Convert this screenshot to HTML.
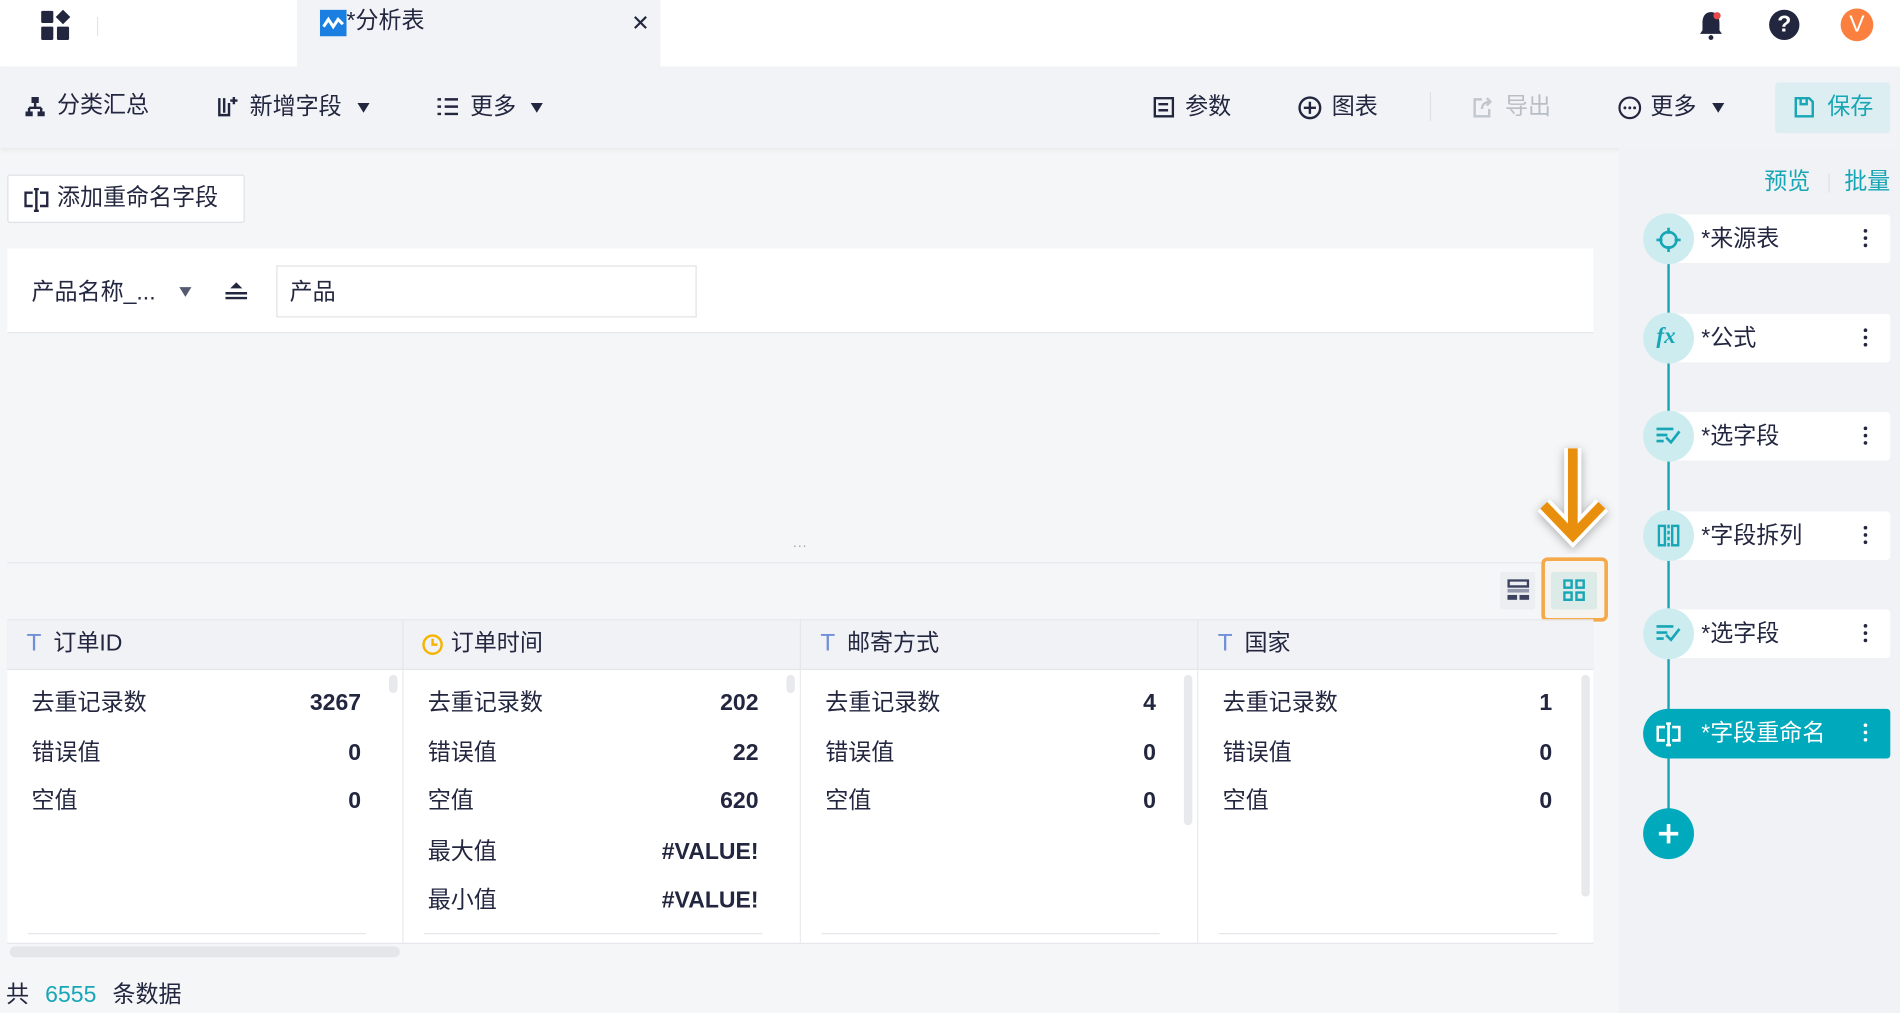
<!DOCTYPE html>
<html><head><meta charset="utf-8">
<style>
*{box-sizing:border-box;margin:0;padding:0}
html,body{width:1900px;height:1013px;overflow:hidden;background:#f5f6f8}
#w{width:1568px;height:836px;transform:scale(1.21173);transform-origin:0 0;position:relative;font-family:"Liberation Sans","Noto Sans CJK SC",sans-serif;color:#22263f;font-size:19px}
.a{position:absolute}
.t{position:absolute;white-space:nowrap;line-height:1}
.cap{position:absolute;width:0;height:0;border-left:5px solid transparent;border-right:5px solid transparent;border-top:8px solid #22263f}
.node{position:absolute;left:1377px;width:183px;height:40px;background:#fff;border-radius:0 3px 3px 0}
.circ{position:absolute;left:1356px;width:42px;height:42px;border-radius:50%;background:#cdecf0}
.dots{position:absolute;left:1538px;width:4px}
.dots i{display:block;width:3px;height:3px;background:#22263f;border-radius:50%;margin-bottom:3px}
.col{position:absolute;top:553px;height:225px;background:#fff;border-right:1px solid #e8e9ed}
.hd{position:absolute;top:512px;height:41px;background:#f0f2f5;border-right:1px solid #e4e6ea;border-bottom:1px solid #e4e6ea}
.lab{position:absolute;left:20px;font-size:19px;line-height:1}
.val{position:absolute;right:34px;font-weight:bold;font-size:19px;line-height:1}
</style></head><body><div id="w">
<!-- top bar -->
<div class="a" style="left:0;top:0;width:1568px;height:55px;background:#fff"></div>
<svg class="a" style="left:33px;top:8px" width="26" height="26" viewBox="0 0 26 26"><rect x="1" y="1" width="10" height="10" rx="1" fill="#22263f"/><path d="M19 0 L25 6 L19 12 L13 6Z" fill="#22263f"/><rect x="1" y="14" width="10" height="11" rx="1" fill="#22263f"/><rect x="14" y="14" width="10" height="11" rx="1" fill="#22263f"/></svg>
<div class="a" style="left:80px;top:14px;width:1px;height:16px;background:#e4e4e4"></div>
<div class="a" style="left:245px;top:0;width:300px;height:55px;background:#f2f3f7"></div>
<svg class="a" style="left:264px;top:8px" width="22" height="22" viewBox="0 0 22 22"><rect width="22" height="22" fill="#1a7fe0"/><path d="M3 14 L7 8 L11 14 L15 8 L19 12" stroke="#fff" stroke-width="2.5" fill="none"/></svg>
<div class="t" style="left:286px;top:8px;font-size:19px">*分析表</div>
<div class="t" style="left:521px;top:10px;font-size:18px">✕</div>
<svg class="a" style="left:1401px;top:8px" width="22" height="26" viewBox="0 0 22 26"><path d="M11 2 C6 2 4 6 4 11 L4 17 L2 20 L20 20 L18 17 L18 11 C18 6 16 2 11 2Z" fill="#22263f"/><circle cx="11" cy="23" r="2" fill="#22263f"/><circle cx="16" cy="5" r="3" fill="#e84a4a"/></svg>
<div class="a" style="left:1460px;top:8px;width:25px;height:25px;border-radius:50%;background:#22263f;color:#fff;font-weight:bold;font-size:19px;text-align:center;line-height:25px">?</div>
<div class="a" style="left:1519px;top:7px;width:27px;height:27px;border-radius:50%;background:#fb8040;color:#fff;font-size:19px;text-align:center;line-height:27px">V</div>
<!-- toolbar -->
<div class="a" style="left:0;top:55px;width:1568px;height:67px;background:#f2f3f7;box-shadow:0 2px 4px rgba(0,0,0,.05)"></div>
<svg class="a" style="left:21px;top:80px" width="16" height="16" viewBox="0 0 16 16"><rect x="5" y="0" width="6" height="5" fill="#22263f"/><path d="M8 5V9M3 9H13M3 9V13M13 9V13" stroke="#22263f" stroke-width="2" fill="none"/><rect x="0" y="12" width="6" height="4" fill="#22263f"/><rect x="10" y="12" width="6" height="4" fill="#22263f"/></svg>
<div class="t" style="left:47px;top:78px">分类汇总</div>
<svg class="a" style="left:179px;top:79px" width="18" height="18" viewBox="0 0 18 18"><path d="M2 2V16H10V6" stroke="#22263f" stroke-width="2" fill="none"/><path d="M6 2V14M11 4H17M14 1V7" stroke="#22263f" stroke-width="2"/></svg>
<div class="t" style="left:206px;top:79px">新增字段</div>
<div class="cap" style="left:295px;top:85px"></div>
<svg class="a" style="left:361px;top:80px" width="17" height="16" viewBox="0 0 17 16"><path d="M0 2H3M6 2H17M0 8H3M6 8H17M0 14H3M6 14H17" stroke="#22263f" stroke-width="2"/></svg>
<div class="t" style="left:388px;top:79px">更多</div>
<div class="cap" style="left:438px;top:85px"></div>
<svg class="a" style="left:952px;top:80px" width="17" height="17" viewBox="0 0 17 17"><rect x="1" y="1" width="15" height="15" fill="none" stroke="#22263f" stroke-width="2"/><path d="M4 6H12M4 11H12" stroke="#22263f" stroke-width="2"/></svg>
<div class="t" style="left:978px;top:79px">参数</div>
<svg class="a" style="left:1071px;top:79px" width="20" height="20" viewBox="0 0 20 20"><circle cx="10" cy="10" r="8.5" fill="none" stroke="#22263f" stroke-width="2"/><path d="M10 5V15M5 10H15" stroke="#22263f" stroke-width="2"/></svg>
<div class="t" style="left:1099px;top:79px">图表</div>
<div class="a" style="left:1180px;top:76px;width:1px;height:24px;background:#dde0e5"></div>
<svg class="a" style="left:1215px;top:79px" width="18" height="19" viewBox="0 0 18 19"><path d="M8 3H2V17H14V11" stroke="#c2c6cf" stroke-width="2" fill="none"/><path d="M8 11C8 7 11 5 15 5M12 2L15 5L12 8" stroke="#c2c6cf" stroke-width="2" fill="none"/></svg>
<div class="t" style="left:1242px;top:79px;color:#b9bdc6">导出</div>
<svg class="a" style="left:1335px;top:79px" width="20" height="20" viewBox="0 0 20 20"><circle cx="10" cy="10" r="8.5" fill="none" stroke="#22263f" stroke-width="1.8"/><circle cx="6" cy="10" r="1.2" fill="#22263f"/><circle cx="10" cy="10" r="1.2" fill="#22263f"/><circle cx="14" cy="10" r="1.2" fill="#22263f"/></svg>
<div class="t" style="left:1362px;top:79px">更多</div>
<div class="cap" style="left:1413px;top:85px"></div>
<div class="a" style="left:1465px;top:68px;width:95px;height:42px;background:#ddeef2;border-radius:3px"></div>
<svg class="a" style="left:1480px;top:79px" width="18" height="19" viewBox="0 0 18 19"><path d="M2 2H13L16 5V17H2Z" fill="none" stroke="#17a6b5" stroke-width="2"/><path d="M6 2V7H11V2" stroke="#17a6b5" stroke-width="2" fill="none"/></svg>
<div class="t" style="left:1508px;top:79px;color:#17a6b5">保存</div>
<!-- right panel -->
<div class="a" style="left:1336px;top:122px;width:232px;height:714px;background:#f0f2f5"></div>
<div class="t" style="left:1456px;top:141px;color:#17a6b5">预览</div>
<div class="a" style="left:1509px;top:143px;width:1px;height:16px;background:#dde0e5"></div>
<div class="t" style="left:1522px;top:141px;color:#17a6b5">批量</div>
<div class="a" style="left:1376px;top:200px;width:1.5px;height:488px;background:#17a6b5"></div>
<div class="node" style="top:177px"></div><div class="circ" style="top:176px"></div>
<svg class="a" style="left:1366px;top:187px" width="22" height="22" viewBox="0 0 22 22"><circle cx="11" cy="11" r="6.5" fill="none" stroke="#17a6b5" stroke-width="2.2"/><path d="M11 1V6M11 16V21M1 11H6M16 11H21" stroke="#17a6b5" stroke-width="2.2"/></svg>
<div class="t" style="left:1404px;top:188px">*来源表</div><div class="dots" style="top:189px"><i></i><i></i><i></i></div>
<div class="node" style="top:259px"></div><div class="circ" style="top:258px"></div>
<div class="t" style="left:1367px;top:268px;color:#17a6b5;font-style:italic;font-family:'Liberation Serif',serif;font-weight:bold;font-size:19px">fx</div>
<div class="t" style="left:1404px;top:270px">*公式</div><div class="dots" style="top:271px"><i></i><i></i><i></i></div>
<div class="node" style="top:340px"></div><div class="circ" style="top:339px"></div>
<svg class="a" style="left:1367px;top:352px" width="20" height="16" viewBox="0 0 20 16"><path d="M0 2H14M0 7H9M0 12H6M8 9L12 13L19 4" stroke="#17a6b5" stroke-width="2.2" fill="none"/></svg>
<div class="t" style="left:1404px;top:351px">*选字段</div><div class="dots" style="top:352px"><i></i><i></i><i></i></div>
<div class="node" style="top:422px"></div><div class="circ" style="top:421px"></div>
<svg class="a" style="left:1368px;top:432px" width="18" height="20" viewBox="0 0 18 20"><rect x="1" y="2" width="5" height="16" fill="none" stroke="#17a6b5" stroke-width="2"/><rect x="12" y="2" width="5" height="16" fill="none" stroke="#17a6b5" stroke-width="2"/><path d="M9 1V19" stroke="#17a6b5" stroke-width="2" stroke-dasharray="3 2"/></svg>
<div class="t" style="left:1404px;top:433px">*字段拆列</div><div class="dots" style="top:434px"><i></i><i></i><i></i></div>
<div class="node" style="top:503px"></div><div class="circ" style="top:502px"></div>
<svg class="a" style="left:1367px;top:515px" width="20" height="16" viewBox="0 0 20 16"><path d="M0 2H14M0 7H9M0 12H6M8 9L12 13L19 4" stroke="#17a6b5" stroke-width="2.2" fill="none"/></svg>
<div class="t" style="left:1404px;top:514px">*选字段</div><div class="dots" style="top:515px"><i></i><i></i><i></i></div>
<div class="a" style="left:1356px;top:585px;width:204px;height:41px;background:#00a9bb;border-radius:21px 3px 3px 21px"></div>
<svg class="a" style="left:1367px;top:596px" width="20" height="20" viewBox="0 0 20 20"><path d="M7 4H1V15H7M13 4H19V15H13M8 1H12M10 1V19M8 19H12" stroke="#fff" stroke-width="2.2" fill="none"/></svg>
<div class="t" style="left:1404px;top:596px;color:#fff">*字段重命名</div>
<div class="dots" style="top:597px"><i style="background:#fff"></i><i style="background:#fff"></i><i style="background:#fff"></i></div>
<div class="a" style="left:1356px;top:667px;width:42px;height:42px;border-radius:50%;background:#00a9bb"></div>
<svg class="a" style="left:1367px;top:678px" width="20" height="20" viewBox="0 0 20 20"><path d="M10 2V18M2 10H18" stroke="#fff" stroke-width="3"/></svg>
<!-- main -->
<div class="a" style="left:6px;top:144px;width:196px;height:40px;background:#fff;border:1px solid #dfe1e6;border-radius:2px"></div>
<svg class="a" style="left:20px;top:155px" width="20" height="20" viewBox="0 0 20 20"><path d="M7 4H1V15H7M13 4H19V15H13M8 1H12M10 1V19M8 19H12" stroke="#22263f" stroke-width="2" fill="none"/></svg>
<div class="t" style="left:47px;top:154px">添加重命名字段</div>
<div class="a" style="left:6px;top:205px;width:1309px;height:70px;background:#fff;border-bottom:1px solid #e4e6ea"></div>
<div class="t" style="left:26px;top:232px">产品名称_...</div>
<div class="cap" style="left:148px;top:237px;border-top-color:#555a70"></div>
<svg class="a" style="left:186px;top:232px" width="18" height="16" viewBox="0 0 18 16"><path d="M4 6L9 1L14 6Z" fill="#22263f"/><path d="M0 10H18M0 14H18" stroke="#22263f" stroke-width="2"/></svg>
<div class="a" style="left:228px;top:219px;width:347px;height:43px;border:1px solid #e0e2e6;background:#fff"></div>
<div class="t" style="left:239px;top:232px">产品</div>
<div class="t" style="left:654px;top:444px;color:#aaa;font-size:12px">···</div>
<div class="a" style="left:6px;top:464px;width:1309px;height:1px;background:#e4e6ea"></div>
<!-- arrow -->
<svg class="a" style="left:1262px;top:362px" width="74" height="95" viewBox="0 0 74 95" style="overflow:visible">
<defs><filter id="sh" x="-50%" y="-50%" width="200%" height="200%"><feDropShadow dx="0" dy="2" stdDeviation="4" flood-color="#000" flood-opacity="0.3"/></filter></defs>
<g filter="url(#sh)"><path d="M36 8V78M12 55L36 80L60 55" stroke="#fff" stroke-width="14" fill="none" stroke-linejoin="miter"/><path d="M36 8V78M12 55L36 80L60 55" stroke="#e8900c" stroke-width="8" fill="none"/></g></svg>
<div class="a" style="left:1238px;top:472px;width:29px;height:31px;background:#eceef2;border-radius:2px"></div>
<svg class="a" style="left:1244px;top:478px" width="18" height="18" viewBox="0 0 18 18"><rect x="1" y="1" width="16" height="5" fill="none" stroke="#3c4160" stroke-width="2"/><rect x="0" y="8" width="18" height="3" fill="#9499ad"/><rect x="0" y="13" width="8" height="4" fill="#3c4160"/><rect x="10" y="13" width="8" height="4" fill="#3c4160"/></svg>
<div class="a" style="left:1272px;top:460px;width:55px;height:53px;border:3px solid #f5a94a;border-radius:5px;background:#f6f4f1"></div>
<div class="a" style="left:1280px;top:472px;width:38px;height:31px;background:#dcebe7;border-radius:2px"></div>
<svg class="a" style="left:1290px;top:478px" width="18" height="18" viewBox="0 0 18 18"><rect x="1" y="1" width="6" height="6" fill="none" stroke="#17a6b5" stroke-width="2"/><rect x="11" y="1" width="6" height="6" fill="none" stroke="#17a6b5" stroke-width="2"/><rect x="1" y="11" width="6" height="6" fill="none" stroke="#17a6b5" stroke-width="2"/><rect x="11" y="11" width="6" height="6" fill="none" stroke="#17a6b5" stroke-width="2"/></svg>
<!-- table -->
<div class="a" style="left:6px;top:511px;width:1309px;height:268px;border:1px solid #e4e6ea"></div>
<div class="hd" style="left:6px;width:327px"></div>
<div class="hd" style="left:333px;width:328px"></div>
<div class="hd" style="left:661px;width:328px"></div>
<div class="hd" style="left:989px;width:326px;border-right:none"></div>
<div class="t" style="left:22px;top:521px;color:#6f8fd8;font-size:20px">T</div>
<div class="t" style="left:44px;top:522px">订单ID</div>
<svg class="a" style="left:348px;top:523px" width="18" height="18" viewBox="0 0 18 18"><circle cx="9" cy="9" r="7.5" fill="none" stroke="#f5b400" stroke-width="2"/><path d="M9 4V9H13" stroke="#f5b400" stroke-width="2" fill="none"/></svg>
<div class="t" style="left:372px;top:522px">订单时间</div>
<div class="t" style="left:677px;top:521px;color:#6f8fd8;font-size:20px">T</div>
<div class="t" style="left:699px;top:522px">邮寄方式</div>
<div class="t" style="left:1005px;top:521px;color:#6f8fd8;font-size:20px">T</div>
<div class="t" style="left:1027px;top:522px">国家</div>

<div class="col" style="left:6px;width:327px">
<div class="lab" style="top:18px">去重记录数</div><div class="val" style="top:18px">3267</div>
<div class="lab" style="top:59px">错误值</div><div class="val" style="top:59px">0</div>
<div class="lab" style="top:99px">空值</div><div class="val" style="top:99px">0</div>
<div class="a" style="left:315px;top:4px;width:7px;height:15px;background:#e8e9ec;border-radius:4px"></div>
<div class="a" style="left:17px;top:217px;width:279px;height:1px;background:#e4e6ea"></div>
</div>
<div class="col" style="left:333px;width:328px">
<div class="lab" style="top:18px">去重记录数</div><div class="val" style="top:18px">202</div>
<div class="lab" style="top:59px">错误值</div><div class="val" style="top:59px">22</div>
<div class="lab" style="top:99px">空值</div><div class="val" style="top:99px">620</div>
<div class="lab" style="top:141px">最大值</div><div class="val" style="top:141px">#VALUE!</div>
<div class="lab" style="top:181px">最小值</div><div class="val" style="top:181px">#VALUE!</div>
<div class="a" style="left:316px;top:4px;width:7px;height:15px;background:#e8e9ec;border-radius:4px"></div>
<div class="a" style="left:17px;top:217px;width:279px;height:1px;background:#e4e6ea"></div>
</div>
<div class="col" style="left:661px;width:328px">
<div class="lab" style="top:18px">去重记录数</div><div class="val" style="top:18px">4</div>
<div class="lab" style="top:59px">错误值</div><div class="val" style="top:59px">0</div>
<div class="lab" style="top:99px">空值</div><div class="val" style="top:99px">0</div>
<div class="a" style="left:316px;top:4px;width:7px;height:124px;background:#e8e9ec;border-radius:4px"></div>
<div class="a" style="left:17px;top:217px;width:279px;height:1px;background:#e4e6ea"></div>
</div>
<div class="col" style="left:989px;width:326px;border-right:none">
<div class="lab" style="top:18px">去重记录数</div><div class="val" style="top:18px">1</div>
<div class="lab" style="top:59px">错误值</div><div class="val" style="top:59px">0</div>
<div class="lab" style="top:99px">空值</div><div class="val" style="top:99px">0</div>
<div class="a" style="left:316px;top:4px;width:7px;height:183px;background:#e8e9ec;border-radius:4px"></div>
<div class="a" style="left:17px;top:217px;width:279px;height:1px;background:#e4e6ea"></div>
</div>
<div class="a" style="left:8px;top:781px;width:322px;height:9px;background:#e5e6ea;border-radius:5px"></div>
<div class="t" style="left:5px;top:812px">共 <span style="color:#17a6b5;margin:0 8px">6555</span> 条数据</div>
</div></body></html>
